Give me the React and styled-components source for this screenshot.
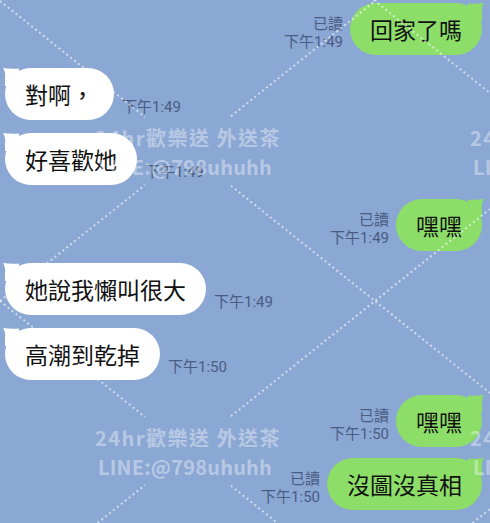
import React from "react";
import styled, { createGlobalStyle } from "styled-components";

const GlobalStyle = createGlobalStyle`
  html, body { margin: 0; padding: 0; }
  body {
    width: 490px;
    height: 523px;
    overflow: hidden;
    background: #8ba7d3;
    font-family: Roboto, "Noto Sans CJK TC", sans-serif;
  }
`;

const Screen = styled.div`
  position: relative;
  width: 490px;
  height: 523px;
  overflow: hidden;
  background: #8ba7d3;
`;

const Thread = styled.div`
  display: flex;
  flex-direction: column;
`;

const Row = styled.div`
  display: flex;
  align-items: flex-end;
  justify-content: ${(p) => (p.$mine ? "flex-end" : "flex-start")};
  gap: ${(p) => (p.$mine ? 7 : 8)}px;
  padding: ${(p) => (p.$mine ? "0 8px 0 0" : "0 0 0 5px")};
  margin-top: ${(p) => p.$space}px;
`;

const Bubble = styled.div`
  position: relative;
  height: 52px;
  display: flex;
  align-items: center;
  padding: 0 20px;
  border-radius: 26px;
  background: ${(p) => (p.$mine ? "#8cde68" : "#ffffff")};
  color: #111;
  font-family: "Noto Sans CJK TC", sans-serif;
  font-size: 23px;
  white-space: nowrap;
`;

const Tail = styled.svg`
  position: absolute;
  top: 0;
  ${(p) => (p.$mine ? "right: -2px;" : "left: -2px; transform: scaleX(-1);")}
`;

const Meta = styled.div`
  display: flex;
  flex-direction: column;
  align-items: ${(p) => (p.$mine ? "flex-end" : "flex-start")};
  padding-bottom: 4px;
  font-family: Roboto, "Noto Sans CJK TC", sans-serif;
  font-size: 15px;
  line-height: 18px;
  color: #4a5c82;
  white-space: nowrap;
`;

const Watermark = styled.svg`
  position: absolute;
  left: 0;
  top: 0;
  z-index: 2;
  pointer-events: none;
`;

const WmText = styled.text`
  font-family: "Noto Sans CJK TC", sans-serif;
  font-weight: 700;
  font-size: 20px;
  letter-spacing: ${(p) => p.$spacing}px;
  fill: rgba(255, 255, 255, 0.4);
`;

const WmLine = styled.line`
  stroke: rgba(255, 255, 255, 0.6);
  stroke-width: 2;
  stroke-dasharray: 2 3;
`;

const messages = [
  { mine: true, text: "回家了嗎", time: "下午1:49", read: true, space: 3 },
  { mine: false, text: "對啊，", time: "下午1:49", space: 13 },
  { mine: false, text: "好喜歡她", time: "下午1:49", space: 13 },
  { mine: true, text: "嘿嘿", time: "下午1:49", read: true, space: 14 },
  { mine: false, text: "她說我懶叫很大", time: "下午1:49", space: 12 },
  { mine: false, text: "高潮到乾掉", time: "下午1:50", space: 13 },
  { mine: true, text: "嘿嘿", time: "下午1:50", read: true, space: 15 },
  { mine: true, text: "沒圖沒真相", time: "下午1:50", read: true, space: 11 },
];

const segments = [
  [373.75, 0, 490, 93],
  [0, 1, 145, 117],
  [231, 185.8, 490, 393],
  [0, 301, 145, 417],
  [231, 485.8, 277.5, 523],
  [0, 301, 145, 185],
  [231, 116.2, 376.25, 0],
  [97.5, 523, 145, 485],
  [231, 416.2, 490, 209],
  [472.5, 523, 490, 509],
];

const marks = [
  [188, 151],
  [188, 451],
  [563, 151],
  [563, 451],
];

function BubbleTail({ mine }) {
  return (
    <Tail $mine={mine} width="16" height="18" viewBox="0 0 16 18">
      <path
        d="M0 0.6 Q9 1.2 16 0 Q13 4 14 12 L14 18 L0 18 Z"
        fill={mine ? "#8cde68" : "#ffffff"}
      />
    </Tail>
  );
}

function Message({ m }) {
  const meta = (
    <Meta $mine={m.mine}>
      {m.read && <span>已讀</span>}
      <span>{m.time}</span>
    </Meta>
  );
  return (
    <Row $mine={m.mine} $space={m.space}>
      {m.mine && meta}
      <Bubble $mine={m.mine}>
        <BubbleTail mine={m.mine} />
        {m.text}
      </Bubble>
      {!m.mine && meta}
    </Row>
  );
}

export default function App() {
  return (
    <Screen>
      <GlobalStyle />
      <Thread>
        {messages.map((m, i) => (
          <Message key={i} m={m} />
        ))}
      </Thread>
      <Watermark width="490" height="523" viewBox="0 0 490 523">
        {segments.map(([x1, y1, x2, y2], i) => (
          <WmLine key={i} x1={x1} y1={y1} x2={x2} y2={y2} />
        ))}
        {marks.map(([x, y], i) => (
          <g key={i}>
            <WmText x={x} y={y - 5} textAnchor="middle" $spacing={1.5}>
              24hr歡樂送 外送茶
            </WmText>
            <WmText x={x - 3} y={y + 24} textAnchor="middle" $spacing={0.2}>
              LINE:@798uhuhh
            </WmText>
          </g>
        ))}
      </Watermark>
    </Screen>
  );
}
